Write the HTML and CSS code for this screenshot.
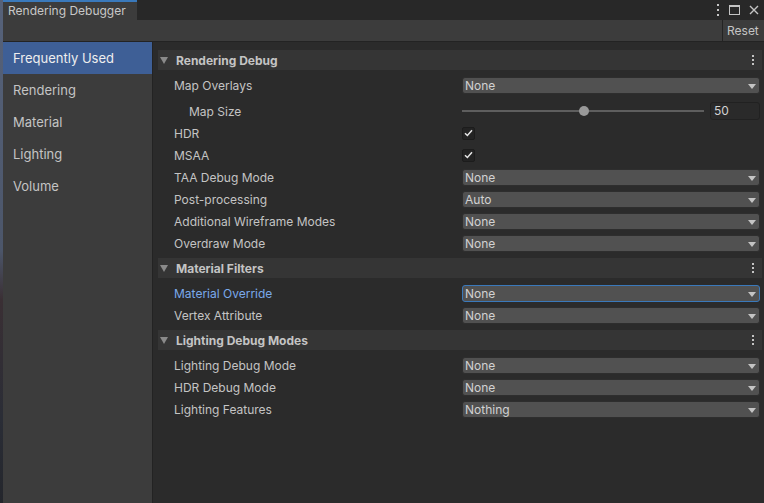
FILE: index.html
```html
<!DOCTYPE html>
<html>
<head>
<meta charset="utf-8">
<link rel="stylesheet" href="styles.css">
</head>
<body>
<div class="window">
  <div class="edge"></div>
  <div class="main">
    <div class="tabbar">
      <div class="tab">Rendering Debugger</div>
      <div class="win-icons">
        <svg width="4" height="12" viewBox="0 0 4 12"><rect x="1" y="0" width="2" height="2" fill="#c4c4c4"/><rect x="1" y="5" width="2" height="2" fill="#c4c4c4"/><rect x="1" y="10" width="2" height="2" fill="#c4c4c4"/></svg>
        <svg width="11" height="10" viewBox="0 0 11 10"><rect x="0.5" y="0.5" width="10" height="9" fill="none" stroke="#c4c4c4"/><rect x="0" y="0" width="11" height="2" fill="#c4c4c4"/></svg>
        <svg width="10" height="10" viewBox="0 0 10 10"><path d="M1 1 L9 9 M9 1 L1 9" stroke="#c4c4c4" stroke-width="1.4"/></svg>
      </div>
    </div>
    <div class="toolbar">
      <div class="toolbar-space"></div>
      <div class="reset">Reset</div>
    </div>
    <div class="body">
      <div class="sidebar">
        <div class="nav selected">Frequently Used</div>
        <div class="nav">Rendering</div>
        <div class="nav">Material</div>
        <div class="nav">Lighting</div>
        <div class="nav">Volume</div>
      </div>
      <div class="content">
        <div class="header">
          <span class="tri"></span><span class="htitle">Rendering Debug</span>
          <span class="kebab"><i></i><i></i><i></i></span>
        </div>
        <div class="row"><span class="label">Map Overlays</span><div class="dropdown">None<span class="arrow"></span></div></div>
        <div class="row tall"><span class="label indent">Map Size</span>
          <div class="slider-wrap">
            <div class="slider"><div class="track"></div><div class="thumb"></div></div>
            <div class="numfield">50</div>
          </div>
        </div>
        <div class="row"><span class="label">HDR</span><div class="check"><svg width="9" height="8" viewBox="0 0 9 8"><path d="M1 4.2 L3.4 6.5 L8 1.3" fill="none" stroke="#e6e6e6" stroke-width="1.5"/></svg></div></div>
        <div class="row"><span class="label">MSAA</span><div class="check"><svg width="9" height="8" viewBox="0 0 9 8"><path d="M1 4.2 L3.4 6.5 L8 1.3" fill="none" stroke="#e6e6e6" stroke-width="1.5"/></svg></div></div>
        <div class="row"><span class="label">TAA Debug Mode</span><div class="dropdown">None<span class="arrow"></span></div></div>
        <div class="row"><span class="label">Post-processing</span><div class="dropdown">Auto<span class="arrow"></span></div></div>
        <div class="row"><span class="label">Additional Wireframe Modes</span><div class="dropdown">None<span class="arrow"></span></div></div>
        <div class="row"><span class="label">Overdraw Mode</span><div class="dropdown">None<span class="arrow"></span></div></div>

        <div class="header">
          <span class="tri"></span><span class="htitle">Material Filters</span>
          <span class="kebab"><i></i><i></i><i></i></span>
        </div>
        <div class="row"><span class="label focus">Material Override</span><div class="dropdown focused">None<span class="arrow"></span></div></div>
        <div class="row"><span class="label">Vertex Attribute</span><div class="dropdown">None<span class="arrow"></span></div></div>

        <div class="header">
          <span class="tri"></span><span class="htitle">Lighting Debug Modes</span>
          <span class="kebab"><i></i><i></i><i></i></span>
        </div>
        <div class="row"><span class="label">Lighting Debug Mode</span><div class="dropdown">None<span class="arrow"></span></div></div>
        <div class="row"><span class="label">HDR Debug Mode</span><div class="dropdown">None<span class="arrow"></span></div></div>
        <div class="row"><span class="label">Lighting Features</span><div class="dropdown">Nothing<span class="arrow"></span></div></div>
      </div>
    </div>
  </div>
</div>
</body>
</html>
```

FILE: styles.css
```css
* { box-sizing: border-box; }
html, body { margin: 0; padding: 0; }
body {
  background: #282828;
  font-family: Inter, "Noto Sans", "Liberation Sans", sans-serif;
  color: #c4c4c4;
  width: 764px;
  height: 503px;
  overflow: hidden;
}
.window { display: flex; height: 503px; }
.edge {
  width: 3px;
  background: linear-gradient(#56627a 0, #4c566a 250px, #3a2f34 300px, #2a2d36 420px, #24262c 503px);
}
.main { flex: 1; display: flex; flex-direction: column; min-width: 0; }

.tabbar {
  height: 20px;
  display: flex;
  align-items: stretch;
  background: #282828;
}
.tab {
  width: 134px;
  background: #3c3c3c;
  border-top: 2px solid #3a79bb;
  font-size: 12px;
  padding-left: 5px;
  line-height: 18px;
  color: #c8c8c8;
}
.win-icons {
  margin-left: auto;
  display: flex;
  align-items: center;
  gap: 9px;
  padding-right: 5px;
}

.toolbar {
  height: 22px;
  background: #3c3c3c;
  border-bottom: 1px solid #232323;
  display: flex;
}
.toolbar-space { flex: 1; }
.reset {
  width: 42px;
  border-left: 1px solid #232323;
  font-size: 12px;
  line-height: 21px;
  padding-left: 4px;
  color: #c4c4c4;
}

.body { flex: 1; display: flex; min-height: 0; }
.sidebar {
  width: 150px;
  background: #3c3c3c;
  border-right: 1px solid #232323;
}
.nav {
  height: 32px;
  line-height: 32px;
  padding-left: 10px;
  font-size: 13px;
  color: #c4c4c4;
}
.nav.selected { background: #3e5f96; color: #eeeeee; }

.content {
  flex: 1;
  background: #2b2b2b;
  padding: 4px 2px 0 5px;
}
.header {
  height: 20px;
  margin-top: 4px;
  margin-bottom: 4px;
  background: #353535;
  display: flex;
  align-items: center;
  padding-left: 2px;
}
.tri {
  width: 0; height: 0;
  border-left: 4px solid transparent;
  border-right: 4px solid transparent;
  border-top: 7px solid #8a8a8a;
  margin-right: 8px;
}
.htitle { font-size: 12px; font-weight: 700; color: #c4c4c4; }
.kebab {
  margin-left: auto;
  margin-right: 8px;
  display: flex;
  flex-direction: column;
  gap: 2px;
}
.kebab i { display: block; width: 2px; height: 2px; background: #c4c4c4; }

.row {
  height: 22px;
  display: grid;
  grid-template-columns: 288px 1fr;
  align-items: center;
  padding-left: 16px;
  padding-right: 2px;
}
.row.tall { height: 26px; padding-top: 4px; }
.label { font-size: 12px; color: #c4c4c4; white-space: nowrap; }
.label.indent { padding-left: 15px; }
.label.focus { color: #7aa9ea; }

.dropdown {
  position: relative;
  height: 17px;
  background: #515151;
  border: 1px solid #2e2e2e;
  border-radius: 3px;
  font-size: 12px;
  line-height: 15px;
  padding-left: 2px;
  color: #d2d2d2;
}
.dropdown.focused { border-color: #3a79bb; }
.arrow {
  position: absolute;
  right: 3px;
  top: 6px;
  width: 0; height: 0;
  border-left: 4px solid transparent;
  border-right: 4px solid transparent;
  border-top: 5px solid #c4c4c4;
}

.slider-wrap { display: flex; align-items: center; gap: 6px; }
.slider { position: relative; flex: 1; height: 12px; }
.track {
  position: absolute;
  left: 0; right: 0; top: 5px;
  height: 2px;
  background: #5e5e5e;
}
.thumb {
  position: absolute;
  left: 117px;
  top: 1px;
  width: 10px; height: 10px;
  border-radius: 50%;
  background: #999999;
}
.numfield {
  width: 50px;
  height: 18px;
  background: #2a2a2a;
  border: 1px solid #212121;
  border-radius: 3px;
  font-size: 12px;
  line-height: 16px;
  padding-left: 3px;
  color: #d2d2d2;
}
.check {
  width: 13px; height: 13px;
  background: #232323;
  border: 1px solid #1c1c1c;
  border-radius: 2px;
  display: flex;
  align-items: center;
  justify-content: center;
}
```
